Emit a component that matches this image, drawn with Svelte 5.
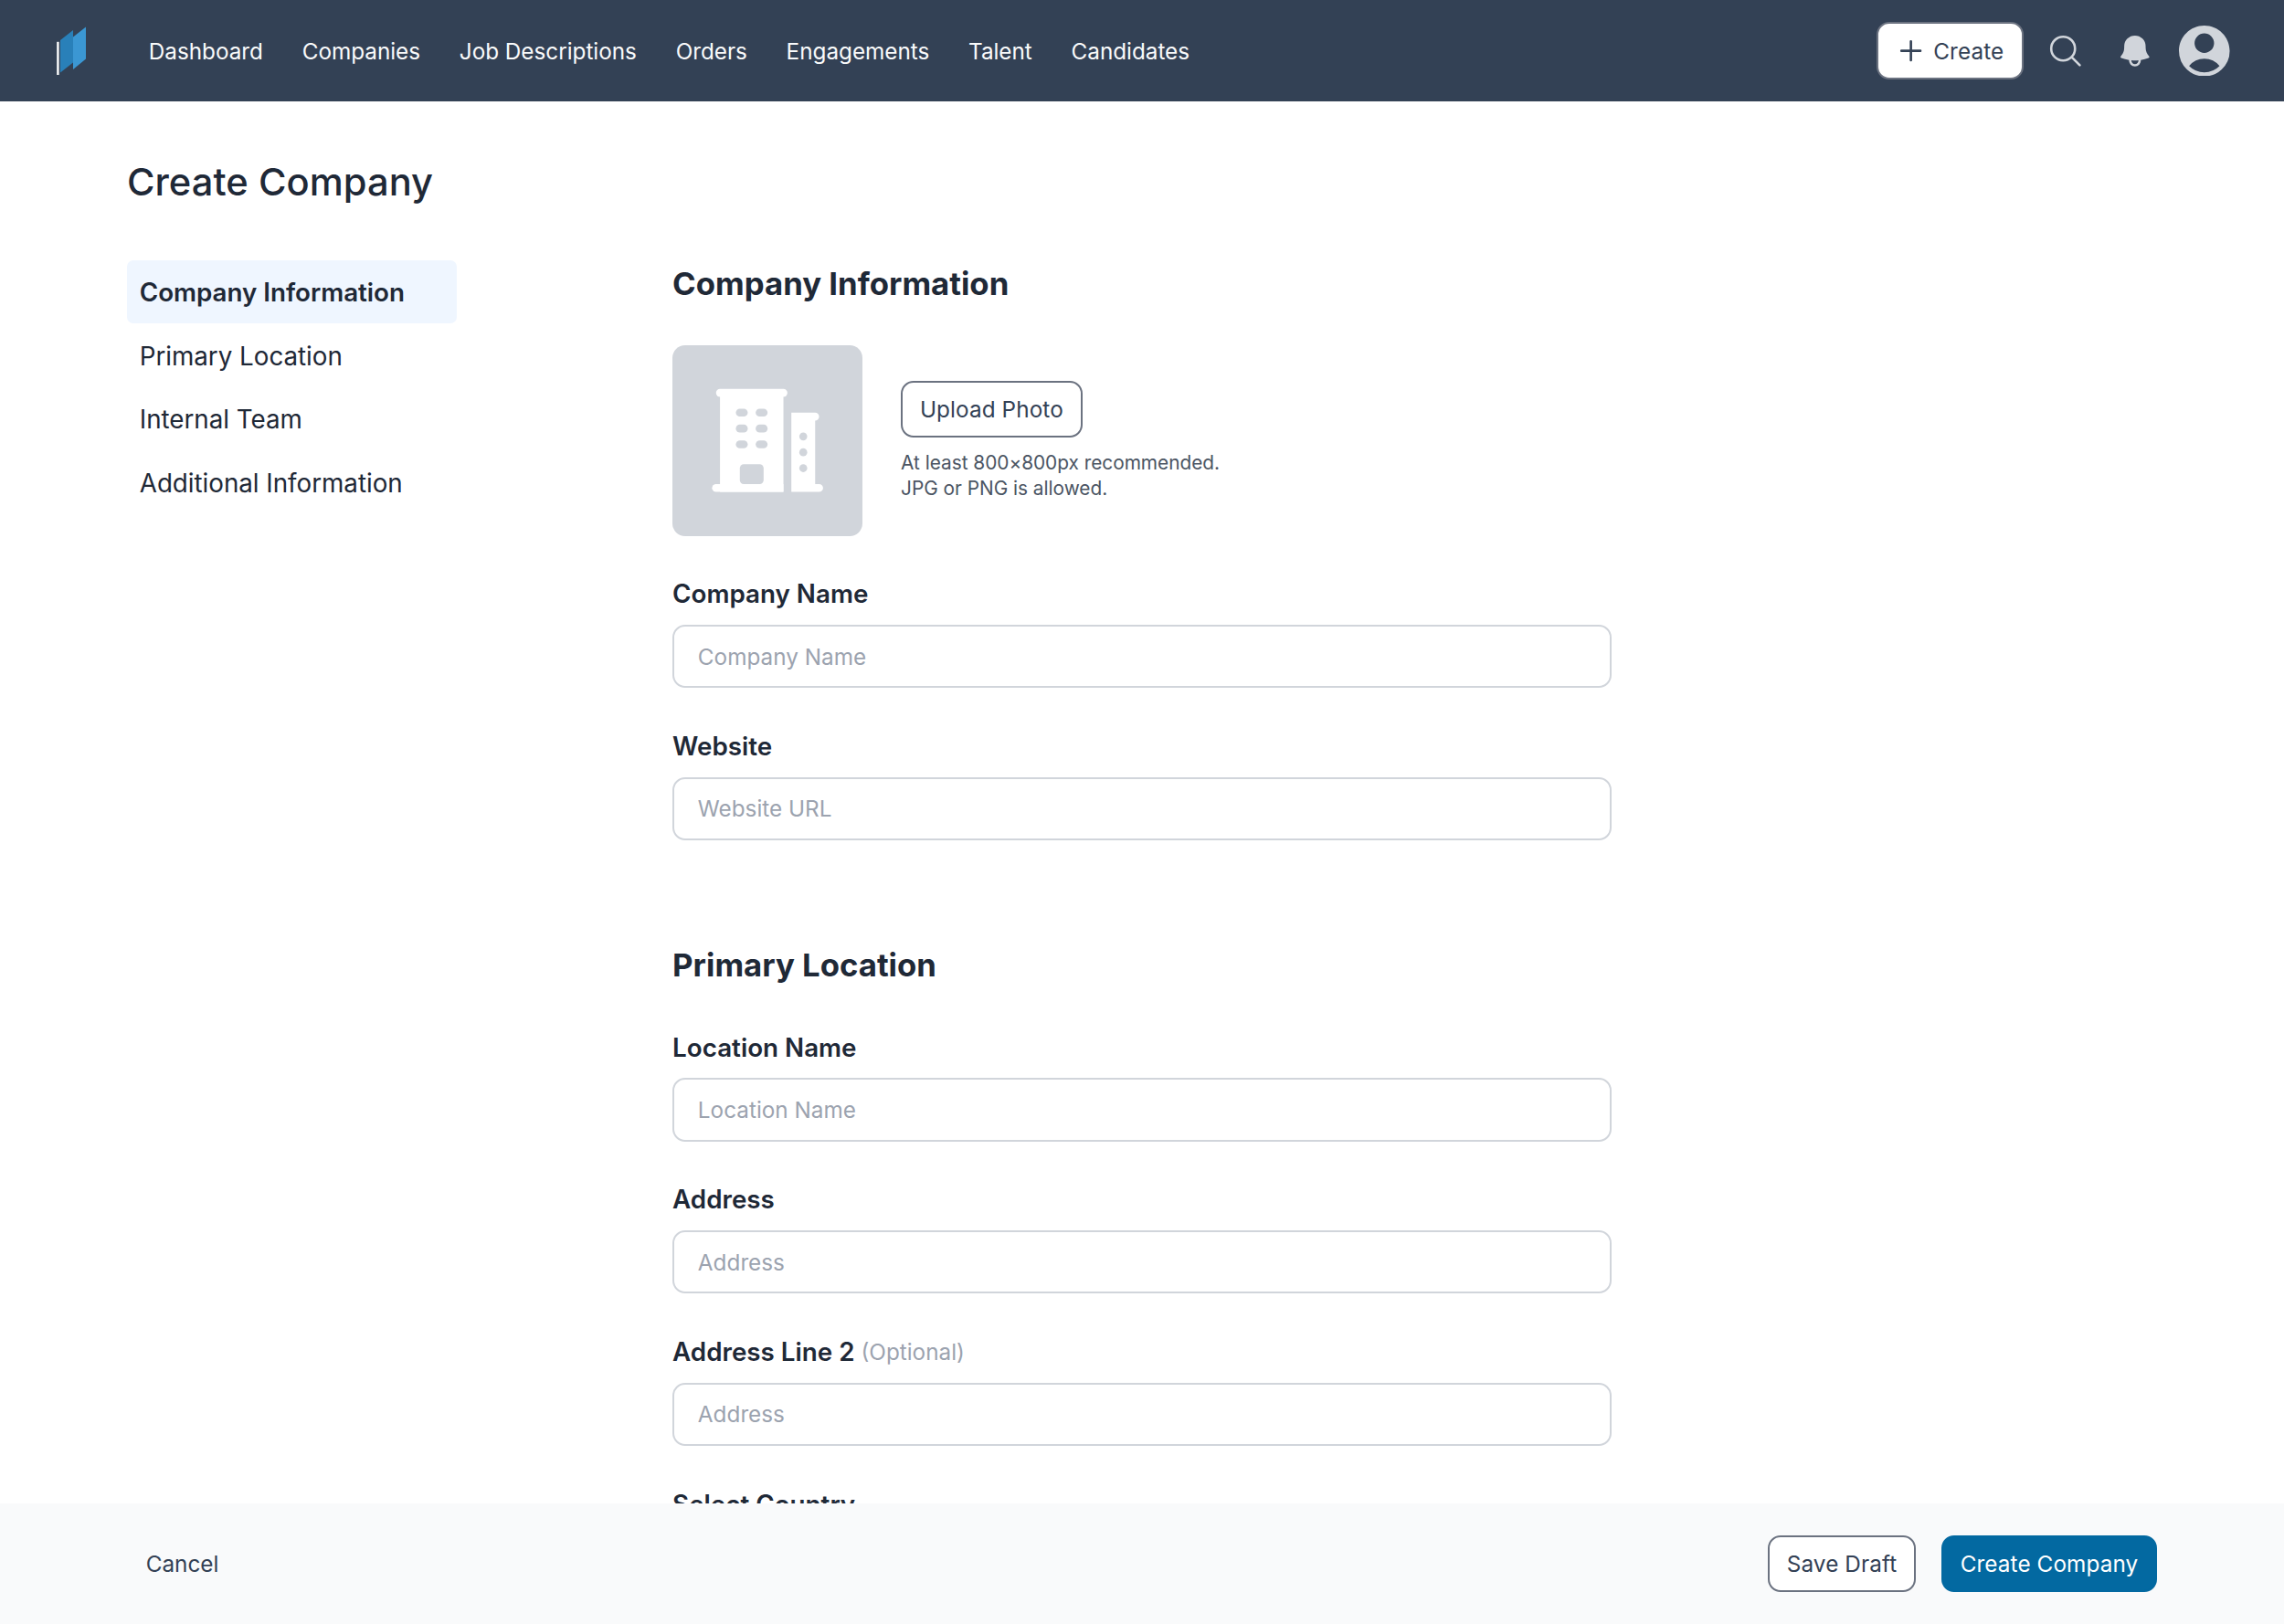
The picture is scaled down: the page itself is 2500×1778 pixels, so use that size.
<script>
    const navLinks = [
        "Dashboard",
        "Companies",
        "Job Descriptions",
        "Orders",
        "Engagements",
        "Talent",
        "Candidates",
    ];
    const steps = [
        "Company Information",
        "Primary Location",
        "Internal Team",
        "Additional Information",
    ];
    let activeStep = "Company Information";

    const companyFields = [
        { id: "name", label: "Company Name", placeholder: "Company Name" },
        { id: "website", label: "Website", placeholder: "Website URL" },
    ];
    const locationFields = [
        { id: "location", label: "Location Name", placeholder: "Location Name" },
        { id: "address", label: "Address", placeholder: "Address" },
        { id: "address2", label: "Address Line 2", placeholder: "Address", optional: true },
        { id: "country", label: "Select Country", placeholder: "Country" },
    ];
    let values = {};
</script>

<div class="page">
    <header class="topbar">
        <svg class="logo" viewBox="0 0 34 56">
            <path d="M1.2 17.8h2.4v36.2h-2.4z" fill="#fff" />
            <path d="M5 16 19 5v35.5L5 51.5z" fill="#2980b9" />
            <path d="M19 12.5 33 1.5v35L19 48z" fill="#3b97d3" />
        </svg>
        <nav>
            {#each navLinks as link}
                <a href="#top">{link}</a>
            {/each}
        </nav>
        <button class="btn create">
            <svg class="plus" viewBox="0 0 18 18">
                <path d="M9 3v12M3 9h12" />
            </svg>
            Create
        </button>
        <svg class="icon search" viewBox="0 0 24 24">
            <path
                d="m21 21-5.197-5.197m0 0A7.5 7.5 0 1 0 5.196 5.196a7.5 7.5 0 0 0 10.607 10.607Z"
            />
        </svg>
        <svg class="icon bell" viewBox="0 0 24 24">
            <path
                fill-rule="evenodd"
                d="M5.25 9a6.75 6.75 0 0 1 13.5 0v.75c0 2.123.8 4.057 2.118 5.52a.75.75 0 0 1-.297 1.206c-1.544.57-3.16.99-4.831 1.243a3.75 3.75 0 1 1-7.48 0 24.585 24.585 0 0 1-4.831-1.244.75.75 0 0 1-.298-1.205A8.217 8.217 0 0 0 5.25 9.75V9Zm4.502 8.9a2.25 2.25 0 1 0 4.496 0 25.057 25.057 0 0 1-4.496 0Z"
            />
        </svg>
        <svg class="avatar" viewBox="2.25 2.25 19.5 19.5">
            <path
                fill-rule="evenodd"
                d="M18.685 19.097A9.723 9.723 0 0 0 21.75 12c0-5.385-4.365-9.75-9.75-9.75S2.25 6.615 2.25 12a9.723 9.723 0 0 0 3.065 7.097A9.716 9.716 0 0 0 12 21.75a9.716 9.716 0 0 0 6.685-2.653Zm-12.54-1.285A7.486 7.486 0 0 1 12 15a7.486 7.486 0 0 1 5.855 2.812A8.224 8.224 0 0 1 12 20.25a8.224 8.224 0 0 1-5.855-2.438ZM15.75 9a3.75 3.75 0 1 1-7.5 0 3.75 3.75 0 0 1 7.5 0Z"
            />
        </svg>
    </header>

    <main>
        <h1>Create Company</h1>
        <div class="columns">
            <aside>
                {#each steps as step}
                    <button
                        class="step"
                        class:active={step === activeStep}
                        on:click={() => (activeStep = step)}
                    >
                        {step}
                    </button>
                {/each}
            </aside>

            <form>
                <section>
                    <h2>Company Information</h2>
                    <div class="photo-row">
                        <div class="photo">
                            <svg viewBox="0 0 120 120">
                                <g fill="#fff">
                                    <rect x="27.5" y="27.5" width="45" height="5" rx="2.5" />
                                    <path d="M30 30h40v62.5H30z" />
                                    <path d="M27.5 87.5H70v5H27.5a2.5 2.5 0 0 1 0-5z" />
                                    <path
                                        d="M75 42.5h15a2.5 2.5 0 0 1 0 5v40h2.5a2.5 2.5 0 0 1 0 5H75z"
                                    />
                                </g>
                                <g fill="#d1d5db">
                                    {#each [40, 50, 60] as y}
                                        <rect x="40" {y} width="7.5" height="5" rx="2.5" />
                                        <rect x="52.5" {y} width="7.5" height="5" rx="2.5" />
                                        <circle cx="82.5" cy={y + 17.5} r="2.5" />
                                    {/each}
                                    <rect x="42.5" y="75" width="15" height="12.5" rx="2.5" />
                                </g>
                            </svg>
                        </div>
                        <div class="upload">
                            <button type="button" class="btn">Upload Photo</button>
                            <p>At least 800×800px recommended.<br />JPG or PNG is allowed.</p>
                        </div>
                    </div>
                    {#each companyFields as field}
                        <div class="field">
                            <label for={field.id}>{field.label}</label>
                            <input
                                id={field.id}
                                type="text"
                                placeholder={field.placeholder}
                                bind:value={values[field.id]}
                            />
                        </div>
                    {/each}
                </section>

                <section>
                    <h2>Primary Location</h2>
                    {#each locationFields as field}
                        <div class="field">
                            <label for={field.id}>
                                {field.label}
                                {#if field.optional}<span>(Optional)</span>{/if}
                            </label>
                            <input
                                id={field.id}
                                type="text"
                                placeholder={field.placeholder}
                                bind:value={values[field.id]}
                            />
                        </div>
                    {/each}
                </section>
            </form>
        </div>
    </main>

    <footer>
        <button class="btn ghost">Cancel</button>
        <button class="btn">Save Draft</button>
        <button class="btn primary">Create Company</button>
    </footer>
</div>

<style>
    /* 1rem is 16 units of a 1440 wide layout */
    :global(html) {
        font-size: calc(100vw / 90);
    }
    :global(body) {
        margin: 0;
    }
    .page {
        display: flex;
        flex-direction: column;
        height: 100vh;
        overflow: hidden;
        background: #fff;
        color: #1f2937;
        font-family: Inter, "Liberation Sans", sans-serif;
        font-size: 0.875rem;
    }
    .page * {
        box-sizing: border-box;
    }
    button,
    input {
        font: inherit;
        color: inherit;
    }
    .topbar {
        display: flex;
        align-items: center;
        flex: none;
        height: 4rem;
        padding: 0 2.125rem 0 2.1875rem;
        background: #334155;
        color: #fff;
    }
    .logo {
        width: 34px;
        height: 56px;
    }
    nav {
        display: flex;
        gap: 1.54rem;
        margin: 0 auto 0 2.45rem;
    }
    nav a {
        color: #f9fafb;
        letter-spacing: -0.001em;
        text-decoration: none;
    }
    .btn {
        display: flex;
        align-items: center;
        justify-content: center;
        height: 2.25rem;
        padding: 0 calc(0.75rem - 2px);
        border: 2px solid #6b7280;
        border-radius: 0.5rem;
        background: #fff;
        color: #334155;
        letter-spacing: 0.004em;
        white-space: nowrap;
    }
    .create {
        gap: 0.3125rem;
        width: 5.8rem;
        margin-right: 0.875rem;
    }
    .plus {
        width: 1.125rem;
        height: 1.125rem;
        stroke: #334155;
        stroke-width: 1.5;
        stroke-linecap: round;
    }
    .icon {
        width: 1.5rem;
        height: 1.5rem;
    }
    .search {
        margin-right: 1.25rem;
        fill: none;
        stroke: #d1d5db;
        stroke-width: 1.5;
        stroke-linecap: round;
    }
    .bell {
        margin-right: 1rem;
        fill: #d1d5db;
    }
    .avatar {
        width: 2rem;
        height: 2rem;
        fill: #d1d5db;
    }
    main {
        flex: 1;
        min-height: 0;
        overflow: hidden;
        padding: 2rem 5rem 0;
    }
    h1 {
        height: 2.25rem;
        margin: 0 0 2rem;
        padding-top: 1px;
        font-size: 1.5rem;
        font-weight: 500;
        letter-spacing: 0.001em;
        line-height: 2.25rem;
    }
    .columns {
        display: flex;
        gap: 8.5rem;
    }
    aside {
        display: flex;
        flex-direction: column;
        width: 13rem;
    }
    .step {
        height: 2.5rem;
        padding: 2px 0.5rem 0;
        border: none;
        border-radius: 0.25rem;
        background: none;
        font-size: 1rem;
        letter-spacing: -0.001em;
        text-align: left;
    }
    .step.active {
        background: #eff6ff;
        font-weight: 600;
    }
    form {
        width: 37rem;
    }
    section {
        display: flex;
        flex-direction: column;
        gap: 1.5rem;
        margin-bottom: 4rem;
    }
    h2 {
        height: 1.875rem;
        margin: 0;
        font-size: 1.25rem;
        font-weight: 700;
        line-height: 1.8rem;
    }
    .photo-row {
        display: flex;
        align-items: center;
        gap: 1.5rem;
    }
    .photo {
        width: 7.5rem;
        height: 7.5rem;
        border-radius: 0.5rem;
        background: #d1d5db;
    }
    .photo svg {
        display: block;
    }
    .upload {
        display: flex;
        flex-direction: column;
        align-items: flex-start;
        gap: 0.5rem;
    }
    .upload p {
        margin: 0;
        color: #4b5563;
        font-size: 0.75rem;
        letter-spacing: -0.001em;
        line-height: 1rem;
    }
    .field {
        display: flex;
        flex-direction: column;
        gap: 0.5rem;
    }
    label {
        display: flex;
        align-items: center;
        gap: 0.25rem;
        height: 1.5rem;
        padding-top: 2px;
        font-size: 1rem;
        font-weight: 600;
    }
    label span {
        color: #9ca3af;
        font-size: 0.875rem;
        font-weight: 400;
    }
    input {
        height: 2.5rem;
        padding: 0 calc(1rem - 2px);
        border: 2px solid #d1d5db;
        border-radius: 0.5rem;
        background: #fff;
    }
    input::placeholder {
        color: #9ca3af;
        opacity: 1;
    }
    footer {
        display: flex;
        align-items: center;
        flex: none;
        gap: 1rem;
        height: 4.75rem;
        padding: 0 5rem;
        background: #f9fafb;
    }
    .ghost {
        margin-right: auto;
        border-color: transparent;
        background: none;
        letter-spacing: 0;
    }
    .primary {
        border-color: #0369a1;
        background: #0369a1;
        color: #fff;
    }
</style>
